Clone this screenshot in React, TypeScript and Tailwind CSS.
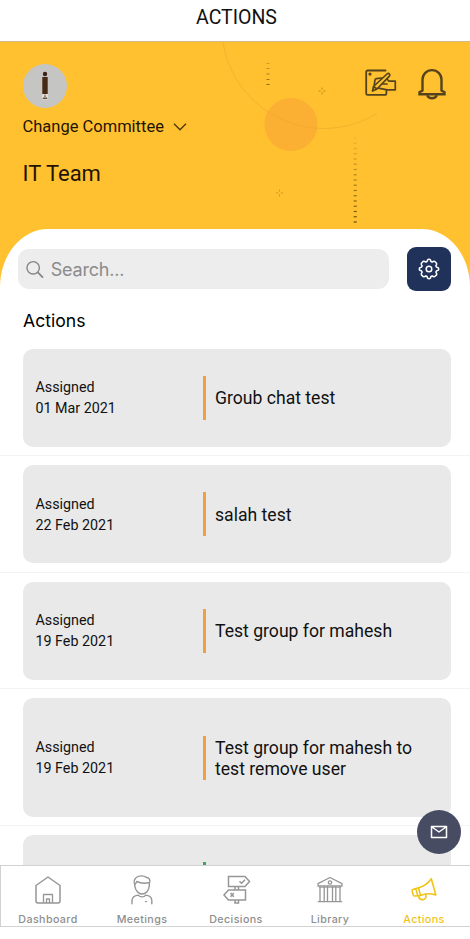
import { useState } from "react"
import type { ReactNode } from "react"

const actions = [
    { id: 1, status: "Assigned", date: "01 Mar 2021", title: "Groub chat test", bar: "bg-[#eba23f]", height: "h-[98px]" },
    { id: 2, status: "Assigned", date: "22 Feb 2021", title: "salah test", bar: "bg-[#eba23f]", height: "h-[98px]" },
    { id: 3, status: "Assigned", date: "19 Feb 2021", title: "Test group for mahesh", bar: "bg-[#eba23f]", height: "h-[98px]" },
    { id: 4, status: "Assigned", date: "19 Feb 2021", title: "Test group for mahesh to test remove user", bar: "bg-[#eba23f]", height: "h-[118.5px]" },
    { id: 5, status: "", date: "", title: "", bar: "bg-[#35a866]", height: "h-[98px]" },
]

// the dotted column gets darker towards the bottom
const dots = Array.from({ length: 17 }, (_, i) => i)

function HeaderArt() {
    return (
        <svg className="absolute inset-0 w-full h-full" viewBox="0 42 470 248" fill="none">
            <circle cx="291" cy="124.5" r="26.5" fill="#fbaf33" />
            <path d="M223 42A102 102 0 0 0 377 113.500" stroke="#e9a82f" strokeOpacity=".6" />
            {[63.5, 68.5, 74, 79.5, 84.5].map((y, i) => (
                <path key={y} d={`M266.5 ${y}h3`} stroke="#5a4108" strokeOpacity={0.3 + i * 0.1} />
            ))}
            {dots.map((i) => (
                <path key={i} d={`M353.7 ${138 + i * 5.25}h3`} stroke="#4a3505" strokeWidth="1.2" strokeOpacity={0.08 + i * 0.048} />
            ))}
            <path d="M322 87.5v2.2M322 92.3v2.2M318.5 91h2.2M323.3 91h2.2" stroke="#b98717" strokeWidth=".9" />
            <path d="M279.5 189.5v2.2M279.5 194.3v2.2M276 193h2.2M280.8 193h2.2" stroke="#c9951d" strokeWidth=".9" />
        </svg>
    )
}

function NoteIcon() {
    return (
        <svg width="32" height="28" viewBox="0 0 32 28" fill="none" stroke="#54431c" strokeWidth="1.8" strokeLinejoin="round" strokeLinecap="round">
            <path d="M20.5 1.5H2.600a1.400 1.400 0 0 0-1.400 1.400v21.600a1.400 1.400 0 0 0 1.400 1.400h17.400a1.400 1.400 0 0 0 1.400-1.400v-3" />
            <circle cx="5" cy="5.1" r=".7" fill="#54431c" />
            <path d="M7.500 22l1-4.500L22 5a1.600 1.600 0 0 1 2.400 2.200L12 20zM8.500 17.500L12 20" strokeWidth="1.700" />
            <path d="M16.500 9l-5 .7a2 2 0 0 0-1.600 1.600l-.6 4.500M22 10l2 2.200h6.300v8.600h-8l-9-1.600M17 15h5" strokeWidth="1.700" />
        </svg>
    )
}

function BellIcon() {
    return (
        <svg width="28" height="32" viewBox="0 0 28 32" fill="none" stroke="#54431c" strokeWidth="2.400" strokeLinejoin="miter">
            <path d="M4.500 22.500V11.600a9.500 9.500 0 0 1 19 0v10.900l3 1.600v2.200h-25v-2.200z" />
            <path d="M9.200 27.200c.8 1.800 2.600 3 4.800 3s4-1.200 4.800-3" />
        </svg>
    )
}

function GearIcon() {
    return (
        <svg width="22" height="22" viewBox="0 0 22 22" fill="none" stroke="#fff" strokeWidth="1.500" strokeLinejoin="round">
            <path d="M9.200 3.300Q9.300 1.300 11 1.300T12.800 3.300Q13.300 4 14.200 4.100Q16.300 2.300 17.700 4.300Q19.600 5.600 17.900 7.800Q18 8.700 18.700 9.200Q20.700 9.300 20.700 11T18.700 12.800Q18 13.300 17.900 14.200Q19.700 16.300 17.700 17.700Q16.400 19.600 14.200 17.900Q13.300 18 12.800 18.700Q12.700 20.700 11 20.700T9.200 18.700Q8.700 18 7.800 17.900Q5.700 19.700 4.300 17.700Q2.400 16.400 4.100 14.200Q4 13.300 3.300 12.800Q1.300 12.700 1.300 11T3.300 9.200Q4 8.700 4.100 7.800Q2.300 5.700 4.300 4.300Q5.600 2.400 7.800 4.100Q8.700 4 9.200 3.300Z" />
            <circle cx="11" cy="11" r="2.800" />
        </svg>
    )
}

function HomeIcon() {
    return (
        <svg width="30" height="32" viewBox="0 0 30 32" fill="none" stroke="#969696" strokeWidth="1.500" strokeLinejoin="round">
            <path d="M3 11.500L15 3l12 8.500V27a2 2 0 0 1-2 2H5a2 2 0 0 1-2-2z" />
            <path d="M10.500 29v-8.500h9V29M13.500 29v-4h3v4" strokeWidth="1.300" />
        </svg>
    )
}

function PersonIcon() {
    return (
        <svg width="30" height="32" viewBox="0 0 30 32" fill="none" stroke="#969696" strokeWidth="1.400" strokeLinejoin="round" strokeLinecap="round">
            <path d="M7.500 9.500c-1.200-4.500 2-7.300 6.500-7.600 2.500-.2 4.200.6 5 1.400 3.300.2 4.900 2.600 3.300 6.400v2.200c-.4 4.600-3.500 8.100-7.100 8.100s-6.900-3.500-7.400-8.100z" />
            <path d="M8 10.300c1-.4 1.300-1.500 1.700-2.800 3.800 1.800 8.100 2 12.100 1.300" />
            <path d="M5 29.800v-3.200c0-3 2.300-4.900 6.200-5.500 1.800 2.400 5.800 2.400 7.600 0 3.900.6 6 2.500 6 5.500v3.200M18.500 27.600h1" />
        </svg>
    )
}

function SignIcon() {
    return (
        <svg width="30" height="32" viewBox="0 0 30 32" fill="none" stroke="#969696" strokeWidth="1.500">
            <path d="M7.500 2.500h16.500l4.500 5-4.500 5H7.500z" />
            <path d="M24.500 16H7.500l-4.500 5 4.500 5h17z" />
            <path d="M14 12.500V16M17.500 12.500V16M14 26v3h3.500V26" />
            <path d="M18.500 7.300l2 2L24 5.800M9.500 19l3.300 3.800M12.800 19l-3.300 3.800" />
        </svg>
    )
}

function LibraryIcon() {
    return (
        <svg width="30" height="32" viewBox="0 0 30 32" fill="none" stroke="#969696" strokeWidth="1.300" strokeLinejoin="round">
            <path d="M3 12V9.700L15 3.500l12 6.200V12z" />
            <circle cx="15" cy="8.500" r="1.700" />
            <path d="M5 12v15M9.200 12v15M12.500 12v15M17.500 12v15M20.800 12v15M25 12v15M2.800 27.700h24.400" />
            <path d="M4 13.500h22" strokeWidth=".7" />
        </svg>
    )
}

function MegaphoneIcon() {
    return (
        <svg width="30" height="32" viewBox="0 0 30 32" fill="none" stroke="#f0c419" strokeWidth="1.600" strokeLinejoin="round" strokeLinecap="round">
            <path d="M9.500 13.800C14.500 12.500 19 9.500 22.300 4.700L26.800 21C21.500 19.300 16 19.400 11.500 21.500z" />
            <path d="M9.500 13.800L4.300 15.300a1.500 1.500 0 0 0-1.100 1.900l1 3.700a1.500 1.500 0 0 0 1.900 1.100l5.400-.5M6.800 14.600l1.900 7" />
            <path d="M9.500 22c.4 2.500 2.400 3.800 4.500 3.600 2.300-.2 3.500-2.100 2.700-5.200" />
        </svg>
    )
}

const tabs: { name: string; icon: ReactNode }[] = [
    { name: "Dashboard", icon: <HomeIcon /> },
    { name: "Meetings", icon: <PersonIcon /> },
    { name: "Decisions", icon: <SignIcon /> },
    { name: "Library", icon: <LibraryIcon /> },
    { name: "Actions", icon: <MegaphoneIcon /> },
]

export default function App() {
    const [search, setSearch] = useState("")
    const [active, setActive] = useState("Actions")

    return (
        <div className="relative flex flex-col w-[470px] h-[939px] overflow-hidden bg-white text-[#111] font-['Roboto',sans-serif]">
            <h1 className="h-[42px] shrink-0 pl-[3px] pt-[6px] text-center text-[19.5px] leading-6 border-b border-[#d0b98a]">ACTIONS</h1>

            <header className="relative h-[248px] shrink-0 bg-[#ffc12f]">
                <HeaderArt />
                <div className="relative flex justify-between pl-[22.5px] pr-6 pt-[22px]">
                    <div className="flex items-center justify-center w-11 h-11 rounded-full bg-[#c5c5c3]">
                        <svg width="8" height="30" viewBox="0 0 8 30">
                            <circle cx="4" cy="3" r="2.200" fill="#3d2314" />
                            <path d="M1.300 6h5.400v17H1.300z" fill="#452b16" />
                            <path d="M1.300 23h5.400v5.500H1.300z" fill="#e9e2da" />
                            <path d="M4 23.500v2M2 27.500l2-2 2 2z" stroke="#452b16" strokeWidth=".8" fill="none" />
                        </svg>
                    </div>
                    <div className="flex gap-[21px] pt-1">
                        <button className="self-start pt-px" aria-label="Notes"><NoteIcon /></button>
                        <button className="self-start" aria-label="Notifications"><BellIcon /></button>
                    </div>
                </div>
                <button className="relative flex items-center gap-[9px] pl-[22.5px] mt-[7px] h-6 text-[16.5px] text-[#1f1404]">
                    Change Committee
                    <svg width="14" height="8" viewBox="0 0 14 8" fill="none" stroke="#4d370a" strokeWidth="1.300">
                        <path d="M1 .8l6 6 6-6" />
                    </svg>
                </button>
                <h2 className="relative pl-[22.5px] mt-[21px] text-[22px] leading-7 text-[#1f1404]">IT Team</h2>
            </header>

            <main className="relative flex-1 min-h-0 -mt-[61px] rounded-t-[48px_58px] bg-white overflow-hidden">
                <div className="flex items-center gap-[17.5px] pl-[18px] pt-[18px]">
                    <label className="flex items-center gap-[7px] w-[371px] h-10 pl-2 rounded-[11px] bg-[#ededed]">
                        <svg width="19" height="19" viewBox="0 0 19 19" fill="none" stroke="#858585" strokeWidth="1.500" strokeLinecap="round">
                            <circle cx="7.700" cy="7.700" r="6.700" />
                            <path d="M12.700 12.700l5 5" strokeWidth="1.900" />
                        </svg>
                        <input
                            className="w-full bg-transparent outline-none text-[18px] tracking-[-0.2px] placeholder-[#8b8b8b] font-['Inter',sans-serif]"
                            placeholder="Search..."
                            value={search}
                            onChange={(e) => setSearch(e.target.value)}
                        />
                    </label>
                    <button className="flex items-center justify-center w-11 h-11 rounded-[9px] bg-[#20315a]" aria-label="Filters">
                        <GearIcon />
                    </button>
                </div>

                <h3 className="pl-[23px] mt-[18px] h-[30.8px] text-[17.6px] leading-6 text-black font-['Inter',sans-serif]">Actions</h3>

                {actions.map((item) => (
                    <div key={item.id} className="pl-[22.5px] pr-[19.5px] pt-[9px] pb-[8.5px] border-b border-[#f3f3f3]">
                        <div className={`flex items-center rounded-[10px] bg-[#e9e9e9] ${item.height}`}>
                            <div className="w-[180px] shrink-0 pl-[13px] pt-px text-[14.3px] leading-[21.3px]">
                                <p>{item.status}</p>
                                <p>{item.date}</p>
                            </div>
                            <div className={`w-[3.5px] h-11 shrink-0 ${item.bar}`}></div>
                            <p className="pl-[9px] pt-[2px] w-[230px] text-[17.6px] leading-[21px]">{item.title}</p>
                        </div>
                    </div>
                ))}
            </main>

            <button className="absolute left-[417px] top-[810px] z-10 flex items-center justify-center w-11 h-11 rounded-full bg-[#474c63]" aria-label="Messages">
                <svg width="18" height="14" viewBox="0 0 18 14" fill="none" stroke="#fff" strokeWidth="1.500" strokeLinejoin="round">
                    <path d="M1.500 1.500h15v11h-15zM2 2l7 5 7-5" />
                </svg>
            </button>

            <nav className="relative grid grid-cols-5 h-[62px] mb-3 -mr-px shrink-0 border-y border-l border-[#d2d2d2] bg-white">
                {tabs.map((tab) => (
                    <button
                        key={tab.name}
                        onClick={() => setActive(tab.name)}
                        className={`flex flex-col items-center pt-2 text-[10.7px] leading-4 font-medium tracking-[0.4px] font-['Inter',sans-serif] ${active === tab.name ? "text-[#f0c419]" : "text-[#8e8e8e]"}`}
                    >
                        {tab.icon}
                        <span className="mt-[6px]">{tab.name}</span>
                    </button>
                ))}
            </nav>
        </div>
    )
}
